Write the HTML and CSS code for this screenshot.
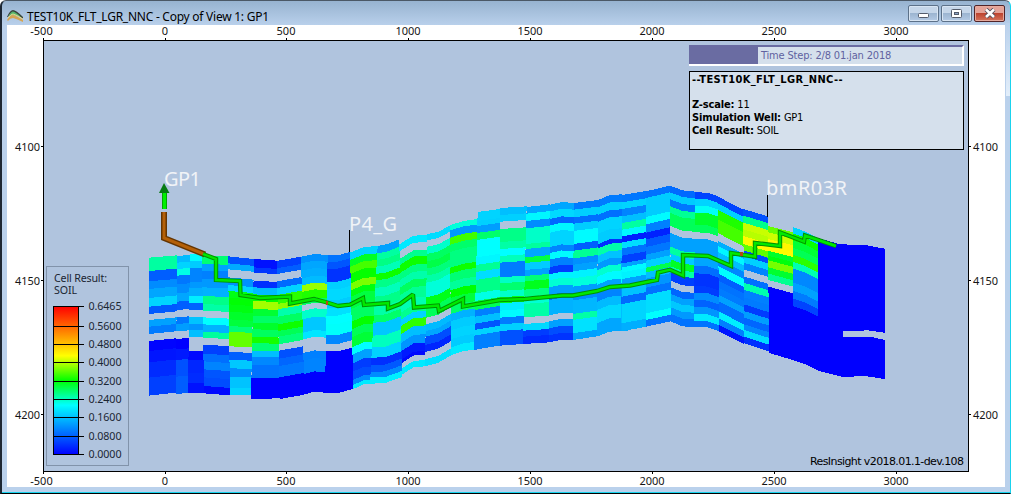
FILE: index.html
```html
<!DOCTYPE html>
<html lang="en">
<head>
<meta charset="utf-8">
<title>TEST10K_FLT_LGR_NNC - Copy of View 1: GP1</title>
<link rel="stylesheet" href="styles.css">
</head>
<body>
<div class="window">
  <header class="titlebar">
    <svg class="app-icon" width="17" height="14" viewBox="0 0 17 14">
      <path d="M0 8Q3 1 6 1Q9 1 16 8V10Q9 5 6 4Q3 4 1 8Z" fill="#39443c"/>
      <path d="M1.500 7.500Q4 2.500 6 2.500Q9 3 14 8L6 6Z" fill="#55b56c"/>
      <path d="M0 11Q3 6 6 6Q10 7 16 11V13Q10 10 6 9Q3 9 1 12Z" fill="#d5a452"/>
      <path d="M1 9Q4 5 6 5Q10 6 16 10" fill="none" stroke="#ead98b" stroke-width="1"/>
    </svg>
    <h1 class="title">TEST10K_FLT_LGR_NNC - Copy of View 1: GP1</h1>
    <div class="controls">
      <span class="btn"><svg width="13" height="10"><rect x="1.5" y="4.5" width="10" height="4" rx="1" fill="#fff" stroke="#545c6b"/></svg></span>
      <span class="btn"><svg width="13" height="10"><rect x="1.5" y=".5" width="10" height="8" rx="1" fill="#fff" stroke="#545c6b"/><rect x="4.5" y="3.5" width="4" height="2" fill="#8aa2c5" stroke="#545c6b"/></svg></span>
      <span class="btn close"><svg width="14" height="11"><path d="M3 1.500L11 9M11 1.500L3 9" stroke="#4c4a58" stroke-width="4.4"/><path d="M3 1.500L11 9M11 1.500L3 9" stroke="#fff" stroke-width="2.6"/></svg></span>
    </div>
  </header>
  <main class="view">
    <svg class="plot" width="998" height="462" viewBox="7 25 998 462">
      <defs>
        <linearGradient id="ramp" x1="0" y1="0" x2="0" y2="1">
          <stop offset="0" stop-color="#f00"/><stop offset=".333" stop-color="#ff0"/>
          <stop offset=".5" stop-color="#0f0"/><stop offset=".667" stop-color="#0ff"/>
          <stop offset="1" stop-color="#00f"/>
        </linearGradient>
      </defs>
      <rect class="area" x="43.5" y="40.5" width="925" height="431"/>
      <g id="axes" class="axes"></g>
      <g id="cells" class="cells"></g>
      <g id="wells" class="wells">
        <path class="casing-edge" d="M164 212V238L205 254.500"/>
        <path class="casing" d="M164 212V238L205 254.500"/>
        <path class="tube-edge" d="M203 254L216 259V280L240 281L240.500 295L260 298L290 296.500V303.500L314 299L327 302.500L338 306L350 304.700L363 298L364 305L388 303V308.500L400 304L413 294.500L414 307.500L438 305.500L439 311L463 299V306.500L500 300L525 299L562 295.500L573 295.500L597 291L610 287L630 285.500L657 280L658 272.500L670 269.700L683 275.500V255L708 256L731 266V253L755 256.700V243L780 246V232.500L804 241.500L805 235.500L836 246"/>
        <path class="tube" d="M203 254L216 259V280L240 281L240.500 295L260 298L290 296.500V303.500L314 299L327 302.500L338 306L350 304.700L363 298L364 305L388 303V308.500L400 304L413 294.500L414 307.500L438 305.500L439 311L463 299V306.500L500 300L525 299L562 295.500L573 295.500L597 291L610 287L630 285.500L657 280L658 272.500L670 269.700L683 275.500V255L708 256L731 266V253L755 256.700V243L780 246V232.500L804 241.500L805 235.500L836 246"/>
        <rect x="326" y="301" width="2" height="4" fill="#b84a10"/>
        <rect x="740" y="252" width="3" height="4" fill="#b04a10"/>
        <rect x="162" y="192" width="5" height="17" fill="#00a800"/>
        <rect x="163" y="192" width="3" height="17" fill="#00f000"/>
        <path d="M164 183L169.500 193H159Z" fill="#067b12"/>
        <path class="pick" d="M349.500 230V252M767.500 195V217"/>
      </g>
      <g class="well-names">
        <text x="164" y="186" textLength="37">GP1</text>
        <text x="349" y="231" textLength="48">P4_G</text>
        <text x="766" y="195" textLength="81">bmR03R</text>
      </g>
      <g class="legend">
        <rect x="46.500" y="266.500" width="82" height="199" class="legend-box"/>
        <text x="54" y="282" textLength="53">Cell Result:</text>
        <text x="54" y="294" textLength="23">SOIL</text>
        <rect x="53.500" y="306.500" width="25" height="148" fill="url(#ramp)" stroke="#000"/>
        <g id="legend-ticks"></g>
      </g>
      <text class="version" x="810" y="465" textLength="154">ResInsight v2018.01.1-dev.108</text>
    </svg>
    <aside class="info">
      <div class="progress"><div class="progress-fill"></div><span class="progress-text">Time Step: 2/8 01.jan 2018</span></div>
      <div class="details">
        <p><b class="case">--TEST10K_FLT_LGR_NNC--</b></p>
        <p>&nbsp;</p>
        <p><b>Z-scale:</b> 11</p>
        <p><b>Simulation Well:</b> GP1</p>
        <p><b>Cell Result:</b> SOIL</p>
      </div>
    </aside>
  </main>
</div>
<script src="grid.js"></script>
</body>
</html>
```
FILE: styles.css
```css
* { box-sizing: border-box; }
body { margin: 0; font-family: "Noto Sans", sans-serif; overflow: hidden; }
.window {
  width: 1011px; height: 494px; padding: 0 5px 5px 5px; display: flex; flex-direction: column;
  border: solid; border-width: 1px 1px 1px 2px; border-color: #4b5866 #19d3ee #000 #1d2733;
  border-radius: 6px 6px 0 0; box-shadow: inset 0 -1px #19d3ee;
  background:
    linear-gradient(#bad1ec, #e3eefa) right 22px / 4px 73px no-repeat,
    linear-gradient(#97b3d0, #bad1ec 25px, #bad1ec);
}
.titlebar { height: 24px; flex: none; display: flex; align-items: flex-start; }
.app-icon { margin: 8px 0 0 0; }
.title {
  margin: 7px 0 0 3px; font: 12px/18px "Noto Sans", sans-serif; height: 17px; color: #000;
  white-space: nowrap; letter-spacing: -.25px;
}
.controls { margin: 4px 0 0 auto; display: flex; gap: 2px; }
.btn {
  width: 31px; height: 17px; border: 1px solid #5c7189; border-radius: 2px;
  display: flex; align-items: center; justify-content: center;
  background: linear-gradient(#c5d6e9 0 48%, #9cb5d1 50%, #b5cbe5); box-shadow: inset 0 0 0 1px #d8e5f3;
}
.close { background: linear-gradient(#e4a398 0 48%, #bd4430 50%, #d5745c); border-color: #512428; box-shadow: inset 0 0 0 1px #e6aa9d; }
.view { width: 998px; height: 462px; flex: none; background: #fff; position: relative; }
.plot { display: block; overflow: visible; }
.area { fill: #b0c4de; stroke: #000; }
.axes { stroke: none; font: 11px "Noto Sans", sans-serif; fill: #151515; }
.axes path { stroke: #000; }
.cells { shape-rendering: crispEdges; }
.wells path { stroke-linejoin: miter; stroke-miterlimit: 2; }
.casing-edge { fill: none; stroke: #653500; stroke-width: 6; }
.casing { fill: none; stroke: #b46008; stroke-width: 3; }
.tube-edge { fill: none; stroke: #009200; stroke-width: 4.4; }
.tube { fill: none; stroke: #00e800; stroke-width: 2.4; }
.pick { stroke: #000; }
.well-names { font: 20px "Noto Sans", sans-serif; fill: #f0f3f7; }
.legend { font: 10.7px "Noto Sans", sans-serif; fill: #1b2633; }
.legend-box { fill: none; stroke: #8193aa; }
.legend path { stroke: #000; }
.version { font: 11px "DejaVu Sans", sans-serif; fill: #000; }
.info { position: absolute; left: 682px; top: 20px; width: 275px; display: flex; flex-direction: column; gap: 5px; }
.progress {
  height: 21px; display: flex; background: #d5e0ec; border: solid;
  border-width: 2px 2px 2px 0; border-color: #6a6ca2 #fff #fff #6a6ca2;
}
.progress-fill { width: 69px; background: #6a6ca2; }
.progress-text { margin-left: 3px; font: 11px/18px "DejaVu Sans Condensed", "DejaVu Sans", sans-serif; letter-spacing: -.17px; color: #6062a0; white-space: nowrap; }
.details { height: 79px; padding: 1px 2px; background: #d5e0ec; border: 1px solid #000; font: 11px/13px "DejaVu Sans Condensed", "DejaVu Sans", sans-serif; }
.details p { margin: 0; height: 13px; white-space: nowrap; letter-spacing: -.2px; }
.details p:nth-child(2) { height: 12px; }
.details b { letter-spacing: -.15px; }
.details .case { letter-spacing: .36px; }
```
FILE: grid.js
```js
const NS = "http://www.w3.org/2000/svg";
const add = (parent, tag, attrs, text) => {
  const el = document.createElementNS(NS, tag);
  for (const k in attrs) el.setAttribute(k, attrs[k]);
  if (text !== undefined) el.textContent = text;
  parent.append(el);
  return el;
};

// Axis ticks and values
const axes = document.getElementById("axes");
for (let i = 0; i < 8; i++) {
  const x = Math.round(42.6 + i * 121.9) + .5, v = -500 + i * 500;
  const lx = x - (v < 0 ? 2 : 0.5);
  add(axes, "path", { d: `M${x} 38V40M${x} 472V474` });
  add(axes, "text", { x: lx, y: 35, "text-anchor": "middle" }, v);
  add(axes, "text", { x: lx, y: 485, "text-anchor": "middle" }, v);
}
[4100, 4150, 4200].forEach((v, i) => {
  const y = 146.5 + i * 134;
  add(axes, "path", { d: `M41 ${y}H43M969 ${y}H971` });
  add(axes, "text", { x: 15, y: y + 4.5, textLength: 25 }, v);
  add(axes, "text", { x: 973, y: y + 4.5, textLength: 25 }, v);
});

const ticks = document.getElementById("legend-ticks");
[["0.6465", 306], ["0.5600", 326], ["0.4800", 344], ["0.4000", 362], ["0.3200", 381],
 ["0.2400", 399], ["0.1600", 417], ["0.0800", 436], ["0.0000", 454]].forEach(([v, y]) => {
  add(ticks, "path", { d: `M53 ${y + .5}H84` });
  add(ticks, "text", { x: 88.5, y: y + 4, textLength: 33 }, v);
});

// Columns of cells, in thirds of a pixel from the section origin.
// x: [top left, top right, bottom left, bottom right]
// s: vertical shift along the layer as [fraction of width, top shift, bottom shift]
// c: "start y:hue" for each layer; g leaves the layer empty; the last number closes the column
const sections = [
  { o: [140, 160], cols: [
    { x: [27,111,27,108], s: [[1,-7,-9]], c: "293:158 333:218 364:207 387:201 414:190 440:219 462:g 480:202 500:211 522:g 543:239 573:235 607:230 653:225 707" },
    { x: [111,150,108,144], s: [[1,-3,-3]], c: "288:196 308:190 327:174 347:212 373:207 400:201 425:218 450:g 472:212 492:203 514:g 537:240 568:234 600:221 650:218 702" },
    { x: [150,189,144,192], s: [[1,0,0]], c: "283:181 303:192 325:209 365:204 385:199 407:184 428:217 450:g 471:194 492:205 510:195 531:g 573:238 600:231 640:230 668:236 700" },
    { x: [186,264,192,270], s: [[1,2,6]], c: "287:147 312:202 332:210 357:204 382:198 408:152 432:159 452:g 472:180 493:198 515:157 533:g 554:225 581:214 604:209 628:220 652:222 678:238 700" },
    { x: [264,342,270,333], s: [[1,8,0]], c: "289:221 310:200 328:g 352:206 375:190 393:125 413:121 433:124 455:130 478:134 498:148 515:97 559:g 576:218 600:193 625:207 651:194 683:190 706" }
  ]},
  { o: [260, 200], cols: [
    { x: [-18,50,-27,60], s: [[1,5,-2]], c: "177:236 202:227 218:g 242:229 262:196 283:120 303:82 327:132 347:144 368:130 388:142 410:115 430:147 452:195 472:208 495:213 535:240 597" },
    { x: [50,123,60,133], s: [[1,-13,-13]], c: "183:225 205:218 222:g 244:215 264:190 285:110 312:87 328:160 350:143 373:117 393:140 410:149 433:g 452:221 476:216 498:212 532:240 597" },
    { x: [123,203,133,195], s: [[.5,-8,-8],[1,-5,-5]], c: "170:206 190:201 212:199 235:196 256:84 276:113 300:143 316:g 333:168 358:193 398:186 418:g 459:210 482:209 522:240 583" },
    { x: [203,270,195,280], s: [[.45,0,0],[1,-10,-12]], c: "166:213 185:220 206:228 245:191 268:189 300:192 325:187 347:180 372:179 405:208 432:g 454:240 579" },
    { x: [270,353,280,345], s: [[.5,-17,-15],[1,-20,-15]], c: "158:190 180:129 200:104 222:119 250:91 271:124 290:135 327:143 365:119 388:140 412:133 442:180 464:202 490:226 515:222 540:208 555:185 567" }
  ]},
  { o: [380, 190], cols: [
    { x: [-7,58,-30,66], s: [[.45,-6,0],[1,-20,-19]], c: "168:202 190:158 210:151 230:163 252:117 271:152 294:164 320:152 350:159 376:145 398:193 437:165 472:190 503:229 525:219 545:207 562:184 580" },
    { x: [58,142,66,135], s: [[.5,-26,-22],[1,-28,-25]], c: "163:185 184:g 207:154 225:117 249:150 270:160 292:142 315:155 347:162 368:154 389:190 408:109 432:195 458:205 483:234 508:238 519:g 535:185 554" },
    { x: [142,210,135,213], s: [[.5,-7,-10],[1,-26,-33]], c: "132:188 151:g 170:168 192:143 214:137 236:149 257:159 278:171 322:126 350:141 383:g 403:196 423:201 440:222 465:231 486:g 508:187 529" },
    { x: [210,293,213,282], s: [[.5,-12,-11],[1,-18,-16]], c: "105:171 121:204 143:105 164:145 186:150 233:117 251:147 277:156 301:120 324:134 350:145 372:198 394:192 421:190 448:192 472:185 495" },
    { x: [293,360,282,362], s: [[1,-9,-14]], c: "66:190 93:191 108:203 129:145 150:180 202:182 225:155 246:188 270:152 310:174 333:140 360:210 380:195 401:220 420:190 437:210 480" }
  ]},
  { o: [500, 180], cols: [
    { x: [0,80,0,69], s: [[1,-5,-5]], c: "84:195 105:191 125:g 147:152 186:159 207:180 228:164 248:211 292:166 310:146 333:167 352:125 370:184 392:181 413:211 433:191 453:221 497" },
    { x: [80,150,69,150], s: [[1,-8,-5]], c: "81:201 101:182 123:207 145:167 192:157 207:201 232:136 249:192 270:202 288:148 304:127 329:151 350:170 372:159 412:g 432:189 452:226 470:230 492" },
    { x: [150,222,147,218], s: [[.5,-8,-7],[1,-5,-6]], c: "74:201 94:189 117:216 136:182 158:190 201:209 219:181 239:210 262:226 283:183 301:170 322:202 345:215 360:198 406:g 424:202 445:222 466:228 487" },
    { x: [222,294,218,291], s: [[1,-9,-11]], c: "69:211 89:191 112:214 131:192 153:181 192:218 212:155 235:206 254:202 274:183 295:172 320:203 342:207 361:197 402:159 420:187 460:202 480" },
    { x: [294,366,291,363], s: [[.5,-15,-15],[1,-17,-17]], c: "60:211 82:191 105:214 126:190 162:192 193:229 206:160 228:194 250:204 270:169 290:181 314:202 340:209 365:196 390:189 430:201 470" },
    { x: [366,390,363,390], s: [[1,-1,-2]], c: "45:211 66:188 86:213 106:190 125:155 147:181 168:234 190:188 208:214 228:226 249:199 270:182 290:180 310:205 350:216 372:195 430:200 453" }
  ]},
  { o: [620, 170], cols: [
    { x: [6,78,6,78], s: [[1,-12,-14]], c: "75:212 97:190 117:209 139:195 159:158 179:182 199:233 217:188 235:213 257:225 280:202 292:181 307:183 327:202 352:194 380:215 402:190 460:199 484" },
    { x: [78,150,78,153], s: [[1,-17,-16]], c: "64:213 84:192 141:181 163:210 188:232 208:219 231:212 254:202 272:191 293:138 307:195 326:205 353:213 375:188 430:180 450:213 470" },
    { x: [150,225,153,222], s: [[.5,14,14],[1,18,16]], c: "47:215 67:192 88:212 109:155 129:141 168:g 189:202 230:158 250:192 268:129 289:160 307:225 332:g 352:216 372:202 391:193 412:204 432:213 455" },
    { x: [225,294,222,297], s: [[.55,1,2],[1,11,14]], c: "67:224 87:190 107:178 128:130 165:141 187:g 207:202 245:202 264:201 288:214 310:228 348:226 368:207 390:217 410:205 431:185 452:213 470" },
    { x: [294,370,297,373], s: [[1,39,38]], c: "80:224 101:191 120:113 148:104 190:g 213:199 228:182 247:195 267:208 289:180 312:218 332:213 354:211 374:202 394:215 425:184 445:210 465:235 485" }
  ]},
  { o: [740, 170], cols: [
    { x: [10,84,12,87], s: [[1,22,24]], c: "117:221 137:153 158:73 178:77 198:59 222:98 241:222 258:191 278:209 298:g 319:214 338:161 359:210 382:211 403:226 423:203 443:216 463:208 480:188 500:229 520" },
    { x: [84,159,87,159], s: [[1,19,21]], c: "168:96 187:72 207:58 227:59 242:130 257:123 271:92 292:131 311:154 330:g 350:240 549" },
    { x: [159,234,159,234], s: [[.5,14,12],[1,33,31]], c: "171:190 190:118 211:133 233:140 254:110 275:162 295:208 315:208 337:202 362:211 385:224 408:240 571" }
  ]}
];

const cells = document.getElementById("cells");
for (const sec of sections) {
  const g = add(cells, "g", { transform: `translate(${sec.o}) scale(.33333)` });
  for (const col of sec.cols) {
    const layers = col.c.split(" ").map(t => t.split(":"));
    const y0 = +layers[0][0], y1 = +layers[layers.length - 1][0];
    const line = y => {
      const f = (y - y0) / (y1 - y0);
      const xl = col.x[0] + (col.x[2] - col.x[0]) * f;
      const xr = col.x[1] + (col.x[3] - col.x[1]) * f;
      return [[0, 0, 0], ...col.s].map(([u, a, b]) => [xl + (xr - xl) * u, y + a + (b - a) * f]);
    };
    for (let i = 0; i < layers.length - 1; i++) {
      if (layers[i][1] === "g") continue;
      const pts = [...line(+layers[i][0]), ...line(+layers[i + 1][0]).reverse()];
      add(g, "polygon", { points: pts.map(p => p.map(n => n.toFixed(1))).join(" "), fill: `hsl(${layers[i][1]} 100% 50%)` });
    }
  }
  if (sec.o[0] === 740) {
    add(g, "polygon", { points: "234,204 300,223 375,225 434,236 434,488 375,480 370,483 309,483 309,500 395,501 434,510 434,627 375,618 310,621 234,602", fill: "#00f" });
  }
}
```
